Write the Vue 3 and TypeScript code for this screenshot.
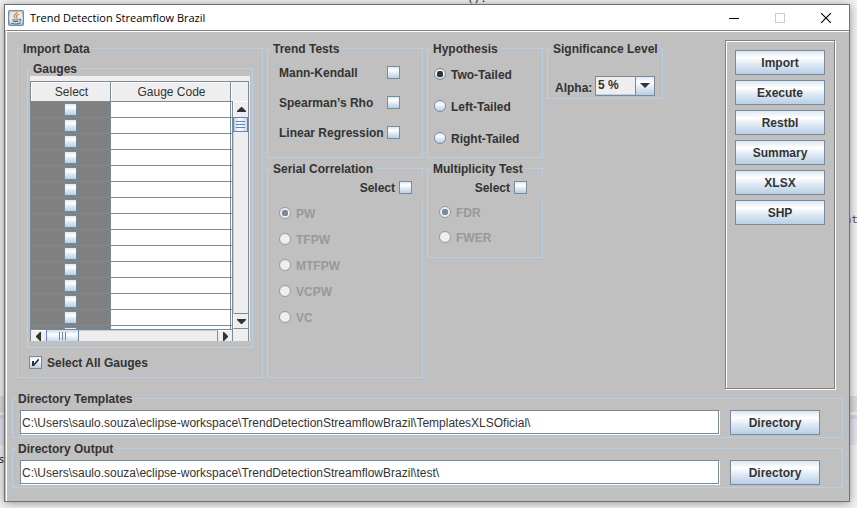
<script setup lang="ts">
import { ref, watch } from 'vue'

const rowCount = 15
const rows = ref<boolean[]>(Array.from({ length: rowCount }, () => false))
const selectAll = ref(true)

const trendTests = ref([
  { id: 'mk', label: 'Mann-Kendall', on: false },
  { id: 'rho', label: 'Spearman’s Rho', on: false },
  { id: 'lr', label: 'Linear Regression', on: false },
])

const hypotheses = ['Two-Tailed', 'Left-Tailed', 'Right-Tailed']
const hypothesis = ref('Two-Tailed')

const serialMethods = ['PW', 'TFPW', 'MTFPW', 'VCPW', 'VC']
const serialMethod = ref('PW')
const serialOn = ref(false)

const multiplicityMethods = ['FDR', 'FWER']
const multiplicityMethod = ref('FDR')
const multiplicityOn = ref(false)

const alphas = ['1 %', '5 %', '10 %']
const alpha = ref('5 %')

const actions = ['Import', 'Execute', 'Restbl', 'Summary', 'XLSX', 'SHP']

const base = 'C:\\Users\\saulo.souza\\eclipse-workspace\\TrendDetectionStreamflowBrazil\\'
const directories = ref([
  { id: 'templates', title: 'Directory Templates', path: base + 'TemplatesXLSOficial\\' },
  { id: 'output', title: 'Directory Output', path: base + 'test\\' },
])

watch(selectAll, (on) => {
  rows.value = rows.value.map(() => on)
})
</script>

<template>
  <div class="desktop">
    <div class="editor" aria-hidden="true">
      <div class="band"></div>
      <span class="code code-top">():</span>
      <span class="code code-left">s</span>
      <span class="code code-right">nt</span>
    </div>

    <main class="window">
      <header class="titlebar">
        <svg class="app-icon" viewBox="0 0 16 16" aria-hidden="true">
          <defs>
            <linearGradient id="tile" x1="0" y1="0" x2="0" y2="1">
              <stop offset="0" stop-color="#8ea9bd" />
              <stop offset="0.5" stop-color="#d5e0e8" />
              <stop offset="1" stop-color="#7793aa" />
            </linearGradient>
          </defs>
          <rect x="0.5" y="0.5" width="15" height="15" rx="1" fill="url(#tile)" stroke="#6f8da6" />
          <rect x="2" y="1.5" width="12" height="13" fill="#eef3f6" opacity="0.75" />
          <path d="M8.8 1.8C9.6 4 5.2 4.6 6 6.4c.3.8 1.2 1.3 1.2 2.2M10.8 4.2C8.6 5 8 5.8 8.8 6.8c.5.8.2 1.4-.4 1.9" fill="none" stroke="#ea7d20" stroke-width="1.2" />
          <path d="M4.2 9.4c1.6.6 4.8.6 6.6 0M5 11.2c1.6.5 3.8.5 5.2 0M3 13c2.6 1 7.4 1 10-.2M11.2 9.2c2-.6 2.4 1.2.2 2.2" fill="none" stroke="#4b7699" stroke-width="1.1" />
        </svg>
        <h1 class="title">Trend Detection Streamflow Brazil</h1>
        <button class="caption" type="button" aria-label="Minimize">
          <svg viewBox="0 0 10 10"><path d="M0 5.5H10" stroke="#000" /></svg>
        </button>
        <button class="caption" type="button" aria-label="Maximize" disabled>
          <svg viewBox="0 0 10 10"><rect x="0.5" y="0.5" width="9" height="9" fill="none" stroke="#ccc" /></svg>
        </button>
        <button class="caption" type="button" aria-label="Close">
          <svg viewBox="0 0 10 10"><path d="M0 0L10 10M10 0L0 10" stroke="#000" stroke-width="1.1" /></svg>
        </button>
      </header>

      <div class="content">
        <div class="upper">
          <div class="groups">
            <fieldset class="group import">
              <legend>Import Data</legend>
              <fieldset class="group gauges">
                <legend>Gauges</legend>
                <div class="table-panel">
                  <div class="scroll-pane">
                    <div class="viewport">
                      <table>
                        <colgroup>
                          <col class="col-select" />
                          <col class="col-code" />
                          <col />
                        </colgroup>
                        <thead>
                          <tr><th scope="col">Select</th><th scope="col">Gauge Code</th><th></th></tr>
                        </thead>
                        <tbody>
                          <tr v-for="(_, i) in rows" :key="i">
                            <td class="pick">
                              <input v-model="rows[i]" class="check" type="checkbox" :aria-label="'Gauge ' + (i + 1)" />
                            </td>
                            <td></td>
                            <td></td>
                          </tr>
                        </tbody>
                      </table>
                    </div>
                    <div class="vbar">
                      <div class="corner"></div>
                      <button class="arrow" type="button" aria-label="Scroll up">
                        <svg viewBox="0 0 9 5"><path d="M4 0H5L9 4V5H0V4Z" fill="#333" /></svg>
                      </button>
                      <div class="vthumb"><i></i><i></i><i></i></div>
                      <div class="vtrack"></div>
                      <button class="arrow down" type="button" aria-label="Scroll down">
                        <svg viewBox="0 0 9 5"><path d="M0 0H9V1L5 5H4L0 1Z" fill="#333" /></svg>
                      </button>
                    </div>
                    <div class="hbar">
                      <button class="harrow" type="button" aria-label="Scroll left">
                        <svg viewBox="0 0 5 9"><path d="M5 0V9H4L0 5V4L4 0Z" fill="#333" /></svg>
                      </button>
                      <div class="hthumb"><i></i><i></i><i></i></div>
                      <div class="htrack"></div>
                      <button class="harrow right" type="button" aria-label="Scroll right">
                        <svg viewBox="0 0 5 9"><path d="M0 0H1L5 4V5L1 9H0Z" fill="#333" /></svg>
                      </button>
                    </div>
                  </div>
                </div>
              </fieldset>
              <label class="option all">
                <input v-model="selectAll" class="check" type="checkbox" />
                <span>Select All Gauges</span>
                <svg class="tick" viewBox="0 0 13 13" aria-hidden="true" v-if="selectAll">
                  <path d="M3 5H5V7.5L9 3H10V4.5L5 10H3Z" fill="#333" />
                </svg>
              </label>
            </fieldset>

            <div class="column">
              <fieldset class="group tests">
                <legend>Trend Tests</legend>
                <label v-for="t in trendTests" :key="t.id" class="test">
                  <span>{{ t.label }}</span>
                  <input v-model="t.on" class="check" type="checkbox" />
                </label>
              </fieldset>
              <fieldset class="group serial">
                <legend>Serial Correlation</legend>
                <label class="enable">
                  <span>Select</span>
                  <input v-model="serialOn" class="check" type="checkbox" />
                </label>
                <div class="radios">
                  <label v-for="m in serialMethods" :key="m" class="option" :class="{ off: !serialOn }">
                    <input v-model="serialMethod" class="radio" type="radio" name="serial" :value="m" :disabled="!serialOn" />
                    <span>{{ m }}</span>
                  </label>
                </div>
              </fieldset>
            </div>

            <div class="column">
              <fieldset class="group hypothesis">
                <legend>Hypothesis</legend>
                <label v-for="h in hypotheses" :key="h" class="option">
                  <input v-model="hypothesis" class="radio" type="radio" name="hypothesis" :value="h" />
                  <span>{{ h }}</span>
                </label>
              </fieldset>
              <fieldset class="group multiplicity">
                <legend>Multiplicity Test</legend>
                <label class="enable">
                  <span>Select</span>
                  <input v-model="multiplicityOn" class="check" type="checkbox" />
                </label>
                <div class="radios">
                  <label v-for="m in multiplicityMethods" :key="m" class="option" :class="{ off: !multiplicityOn }">
                    <input v-model="multiplicityMethod" class="radio" type="radio" name="multiplicity" :value="m" :disabled="!multiplicityOn" />
                    <span>{{ m }}</span>
                  </label>
                </div>
              </fieldset>
            </div>

            <div class="column">
              <fieldset class="group significance">
                <legend>Significance Level</legend>
                <div class="alpha">
                  <label for="alpha">Alpha:</label>
                  <div class="combo">
                    <select id="alpha" v-model="alpha">
                      <option v-for="a in alphas" :key="a">{{ a }}</option>
                    </select>
                    <span class="combo-arrow">
                      <svg viewBox="0 0 10 5"><path d="M0 0H10L5 5Z" fill="#333" /></svg>
                    </span>
                  </div>
                </div>
              </fieldset>
            </div>
          </div>

          <nav class="actions">
            <button v-for="a in actions" :key="a" class="button" type="button">{{ a }}</button>
          </nav>
        </div>

        <div class="directories">
          <fieldset v-for="d in directories" :key="d.id" class="group directory">
            <legend>{{ d.title }}</legend>
            <div class="path-row">
              <input v-model="d.path" class="path" type="text" :aria-label="d.title" />
              <button class="button" type="button">Directory</button>
            </div>
          </fieldset>
        </div>
      </div>
    </main>
  </div>
</template>

<style>
body {
  background: #f2f2f2;
}
</style>

<style scoped>
.desktop {
  --line: #b8cfe5;
  --edge: #7a8a99;
  --panel: #c0c0c0;
  --metal: linear-gradient(#dde8f3 0%, #fff 30%, #dde8f3 60%, #b8cfe5 100%);
  position: relative;
  box-sizing: border-box;
  min-height: 100vh;
  padding: 4px 7px 6px 4px;
  overflow: hidden;
  font: bold 12px/15px "Liberation Sans", Arial, sans-serif;
  color: #333;
}
.desktop *,
.desktop *::before {
  box-sizing: border-box;
}
.editor {
  position: absolute;
  inset: 0;
}
.band {
  position: absolute;
  top: 396px;
  left: 0;
  right: 0;
  height: 49px;
  background: linear-gradient(#dcdcdc 0 16px, #f0f0f0 16px 19px, #d3d6ea 19px 23px, #e4e5ef 23px);
}
.code {
  position: absolute;
  font: 11px/12px "DejaVu Sans Mono", monospace;
  color: #222;
}
.code-top {
  top: -7px;
  left: 467px;
}
.code-left {
  top: 454px;
  left: -2px;
}
.code-right {
  top: 214px;
  right: -1px;
  color: #6a3e3e;
}

.window {
  position: relative;
  border: 1px solid #707070;
  background: var(--panel);
  box-shadow: 0 1px 9px rgba(0, 0, 0, 0.4);
}
.titlebar {
  display: flex;
  align-items: center;
  height: 25px;
  padding-left: 3px;
  background: #fff;
}
.app-icon {
  width: 16px;
  height: 16px;
}
.title {
  flex: 1;
  margin: 0 0 0 6px;
  font: 11px/16px "Open Sans", "Noto Sans", sans-serif;
  color: #000;
}
.caption {
  display: flex;
  align-items: center;
  justify-content: center;
  width: 46px;
  height: 25px;
  padding: 0;
  border: 0;
  background: none;
}
.caption svg {
  width: 10px;
  height: 10px;
}
.content {
  margin-left: 1px;
  padding: 8px 6px 13px 5px;
  border-top: 1px solid #808080;
  border-left: 1px solid #fff;
  box-shadow: inset 0 1px #fff;
}
.upper {
  display: flex;
  gap: 62px;
  padding: 1px 7px 0 5px;
}
.groups {
  flex: 1;
  display: grid;
  grid-template-columns: 246fr 156fr 116fr 116fr;
  gap: 4px;
  padding: 1px 0 12px;
}
.column {
  display: flex;
  flex-direction: column;
  gap: 3px;
  min-width: 0;
}

.group {
  --inset: 0px;
  min-width: 0;
  margin: 0;
  padding: 0 0 0 var(--inset);
  border: 1px solid var(--line);
}
.group > legend {
  margin-left: calc(3px - var(--inset));
  padding: 1px 3px 0 2px;
  line-height: 14px;
  white-space: nowrap;
}
.import {
  --inset: 9px;
  padding: 5px 9px 7px;
}
.gauges {
  --inset: 2px;
  margin-bottom: 7px;
  padding: 0 2px 6px;
}

.table-panel {
  padding: 5px 1px 0 0;
  background: #eee;
}
.scroll-pane {
  display: grid;
  grid-template-columns: 1fr 15px;
  grid-template-rows: 247px 12px;
  border: 1px solid var(--edge);
  border-bottom: 0;
  background: #eee;
}
.viewport {
  min-width: 0;
  overflow: hidden;
  background: #fff;
}
table {
  width: 100%;
  table-layout: fixed;
  border-collapse: separate;
  border-spacing: 0;
}
.col-select {
  width: 80px;
}
.col-code {
  width: 120px;
}
th {
  height: 20px;
  padding: 2px 0 0 2px;
  border-right: 1px solid var(--edge);
  border-bottom: 1px solid var(--edge);
  background: #eee;
  box-shadow: inset 1px 1px #fff;
  font-weight: normal;
  line-height: 15px;
}
th:last-child {
  border-right: 0;
}
td {
  height: 16px;
  padding: 0;
  border-right: 1px solid var(--edge);
  border-bottom: 1px solid var(--edge);
}
.pick {
  background: #808080;
  line-height: 0;
  text-align: center;
}

.vbar {
  display: flex;
  flex-direction: column;
}
.corner {
  height: 20px;
  border-bottom: 1px solid #fff;
}
.arrow,
.harrow {
  display: flex;
  align-items: center;
  justify-content: center;
  padding: 0;
  border: 0;
  background: #eee;
}
.arrow {
  height: 15px;
  border-left: 1px solid #fff;
}
.arrow svg {
  width: 9px;
  height: 5px;
}
.arrow.down {
  height: 16px;
  border-top: 1px solid var(--edge);
  border-bottom: 1px solid var(--edge);
}
.vthumb {
  display: flex;
  flex-direction: column;
  align-items: center;
  justify-content: center;
  gap: 2px;
  height: 15px;
  border: 1px solid #6382bf;
  background: linear-gradient(90deg, #b8cfe5, #fff 40%, #c8daeb);
}
.vthumb i {
  width: 9px;
  height: 1px;
  background: #6382bf;
}
.vtrack {
  flex: 1;
  border-left: 1px solid var(--line);
}
.hbar {
  display: flex;
  min-width: 0;
  border-top: 1px solid var(--edge);
  border-right: 1px solid var(--edge);
  overflow: hidden;
}
.harrow {
  width: 15px;
  border-top: 1px solid #fff;
}
.harrow svg {
  width: 5px;
  height: 9px;
}
.harrow.right {
  border-left: 1px solid var(--edge);
}
.hthumb {
  display: flex;
  justify-content: center;
  align-items: center;
  gap: 2px;
  width: 33px;
  border: 1px solid #6382bf;
  border-width: 0 1px;
  background: linear-gradient(#c8daeb, #fff 40%, #c8daeb);
}
.hthumb i {
  width: 1px;
  height: 8px;
  background: #6382bf;
}
.htrack {
  flex: 1;
  border-top: 1px solid var(--line);
}

.check {
  appearance: none;
  flex: none;
  width: 13px;
  height: 13px;
  margin: 0;
  border: 1px solid var(--edge);
  background: var(--metal);
}
.radio {
  appearance: none;
  flex: none;
  display: grid;
  place-items: center;
  width: 12px;
  height: 12px;
  margin: 0;
  border: 1px solid var(--edge);
  border-radius: 50%;
  background: var(--metal);
}
.radio:checked::before {
  content: "";
  width: 6px;
  height: 6px;
  border-radius: 2px;
  background: #333;
}
.radio:disabled {
  border-color: #999;
  background: #eee;
}
.radio:disabled:checked::before {
  background: var(--edge);
}
.option {
  position: relative;
  display: flex;
  align-items: center;
  gap: 5px;
  height: 14px;
}
.option span,
.test span,
.enable span {
  padding-top: 2px;
}
.option.off {
  color: #999;
}
.all {
  height: 15px;
  padding-left: 2px;
}
.tick {
  position: absolute;
  left: 2px;
  top: 1px;
  width: 13px;
  height: 13px;
  pointer-events: none;
}
.tests {
  --inset: 11px;
  padding: 9px 22px 0 11px;
  height: 117px;
}
.test {
  display: flex;
  align-items: center;
  justify-content: space-between;
  height: 15px;
  margin-bottom: 15px;
  white-space: nowrap;
}
.hypothesis {
  --inset: 6px;
  height: 117px;
  padding: 11px 6px 0;
}
.hypothesis .option {
  margin-bottom: 18px;
}
.serial {
  flex: 1;
}
.enable {
  position: relative;
  display: flex;
  align-items: center;
  justify-content: flex-end;
  gap: 4px;
  height: 24px;
  margin-right: -1px;
  padding: 0 11px 1px 0;
  background: var(--panel);
}
.multiplicity .enable {
  padding-right: 16px;
}
.radios {
  display: flex;
  flex-direction: column;
  gap: 12px;
  padding: 6px 11px;
}
.multiplicity .radios {
  gap: 11px;
  padding: 5px 11px 13px;
}
.significance {
  --inset: 7px;
  padding: 19px 7px 2px;
}
.alpha {
  display: flex;
  align-items: center;
  justify-content: space-between;
}
.alpha label {
  padding-top: 6px;
}
.combo {
  position: relative;
  width: 60px;
  height: 20px;
}
.combo select {
  appearance: none;
  width: 100%;
  height: 100%;
  padding: 0 0 0 2px;
  border: 1px solid var(--edge);
  border-radius: 0;
  background: #eee;
  box-shadow: inset 0 -1px var(--line);
  font: inherit;
  color: inherit;
}
.combo-arrow {
  position: absolute;
  top: 0;
  right: 0;
  bottom: 0;
  display: grid;
  place-items: center;
  width: 20px;
  border: 1px solid var(--edge);
  background: var(--metal);
  pointer-events: none;
}
.combo-arrow svg {
  width: 10px;
  height: 5px;
}

.button {
  width: 90px;
  height: 25px;
  padding: 2px 0 0;
  border: 1px solid var(--edge);
  background: var(--metal);
  font: inherit;
  color: inherit;
}
.actions {
  display: flex;
  flex-direction: column;
  gap: 5px;
  margin: 0 1px 1px 0;
  padding: 9px;
  border: 1px solid #808080;
  box-shadow: 1px 1px #fff, inset 1px 1px #fff;
}
.directories {
  display: flex;
  flex-direction: column;
  gap: 3px;
  padding-top: 1px;
}
.directory {
  --inset: 7px;
  padding: 4px 22px 2px 7px;
}
.path-row {
  display: flex;
  gap: 10px;
}
.path {
  flex: 1;
  min-width: 0;
  height: 24px;
  margin: 0 1px 1px 0;
  padding: 2px 1px 0;
  border: 1px solid var(--edge);
  border-radius: 0;
  background: #fff;
  box-shadow: 1px 1px #fff;
  font: 12px/15px "Liberation Sans", Arial, sans-serif;
  color: #333;
}
</style>
